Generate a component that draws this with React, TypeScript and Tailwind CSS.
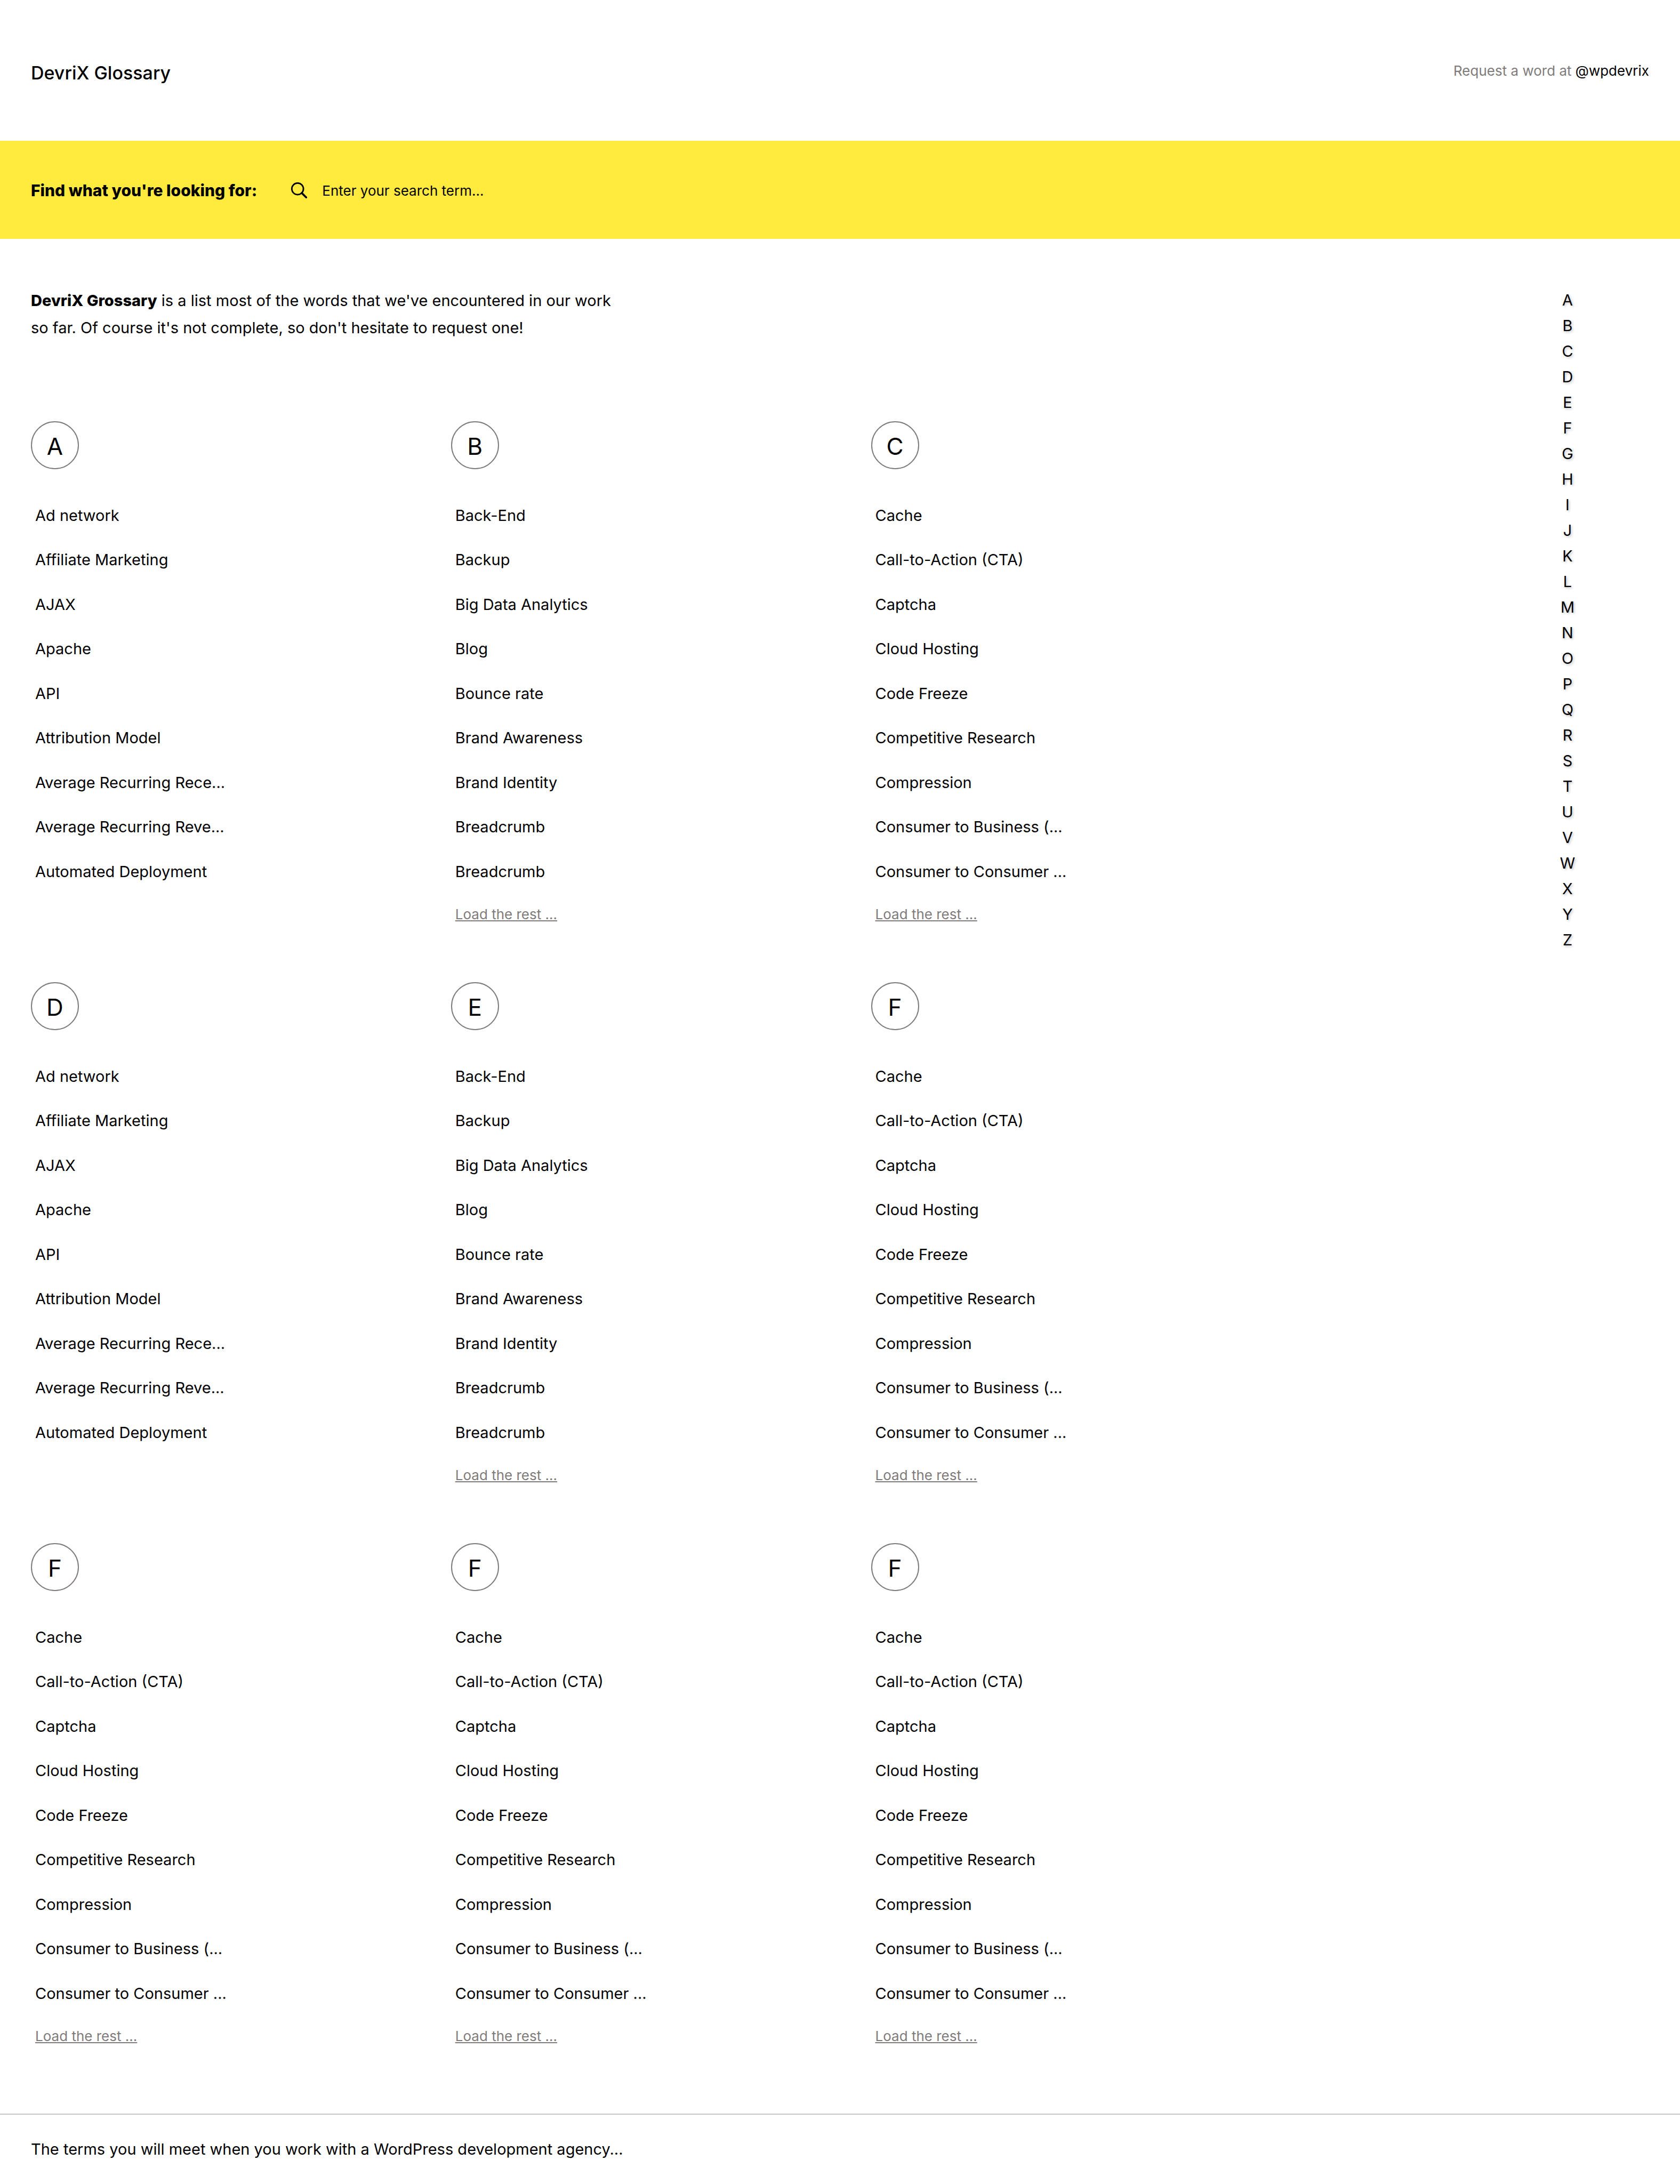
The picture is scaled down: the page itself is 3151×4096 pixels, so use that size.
import { useState } from "react";

const A_TERMS = [
  "Ad network",
  "Affiliate Marketing",
  "AJAX",
  "Apache",
  "API",
  "Attribution Model",
  "Average Recurring Rece...",
  "Average Recurring Reve...",
  "Automated Deployment",
];

const B_TERMS = [
  "Back-End",
  "Backup",
  "Big Data Analytics",
  "Blog",
  "Bounce rate",
  "Brand Awareness",
  "Brand Identity",
  "Breadcrumb",
  "Breadcrumb",
];

const C_TERMS = [
  "Cache",
  "Call-to-Action (CTA)",
  "Captcha",
  "Cloud Hosting",
  "Code Freeze",
  "Competitive Research",
  "Compression",
  "Consumer to Business (...",
  "Consumer to Consumer ...",
];

type Group = { id: string; letter: string; terms: string[]; more: boolean };

const GROUPS: Group[] = [
  { id: "a", letter: "A", terms: A_TERMS, more: false },
  { id: "b", letter: "B", terms: B_TERMS, more: true },
  { id: "c", letter: "C", terms: C_TERMS, more: true },
  { id: "d", letter: "D", terms: A_TERMS, more: false },
  { id: "e", letter: "E", terms: B_TERMS, more: true },
  { id: "f", letter: "F", terms: C_TERMS, more: true },
  { id: "f-2", letter: "F", terms: C_TERMS, more: true },
  { id: "f-3", letter: "F", terms: C_TERMS, more: true },
  { id: "f-4", letter: "F", terms: C_TERMS, more: true },
];

const ALPHABET = "ABCDEFGHIJKLMNOPQRSTUVWXYZ".split("");

function SearchIcon() {
  return (
    <svg viewBox="0 0 32 32" className="size-[30px] shrink-0" fill="none" stroke="currentColor" aria-hidden="true">
      <circle cx="13" cy="13" r="11.6" strokeWidth="3" />
      <path d="M21.2 21.2l9 9" strokeWidth="3.8" strokeLinecap="round" />
    </svg>
  );
}

function TermGroup({ group }: { group: Group }) {
  return (
    <section id={group.id} className="flex flex-col items-start pl-[58px]">
      <h2 className="mb-[23px] flex size-[90px] items-center justify-center rounded-full border-2 border-[#7f7b7b] pt-1 text-[44px] leading-[52px]">
        {group.letter}
      </h2>
      <ul className="flex flex-col pl-2">
        {group.terms.map((term, i) => (
          <li key={i} className="odd:mt-11 even:mt-[43px]">
            <a href={"#" + group.id} className="block leading-10">
              {term}
            </a>
          </li>
        ))}
      </ul>
      {group.more && (
        <button
          type="button"
          className="mt-10 ml-2 text-[26px] leading-10 text-[#7f7b7b] underline decoration-2 underline-offset-2 [text-decoration-skip-ink:none]"
        >
          Load the rest ...
        </button>
      )}
    </section>
  );
}

export default function App() {
  const [query, setQuery] = useState("");
  return (
    <div className="flex min-h-screen flex-col bg-white font-['Inter',sans-serif] text-[29px] text-black">
      <header className="flex items-start justify-between px-[58px] pt-28 pb-[102px]">
        <h1 className="text-[34px] leading-[50px] font-medium">DevriX Glossary</h1>
        <p className="text-[26px] leading-[42px] text-[#7f7b7b]">
          Request a word at{" "}
          <a href="#wpdevrix" className="text-black">
            @wpdevrix
          </a>
        </p>
      </header>

      <form className="flex h-[184px] items-center bg-[#ffea3d] px-[58px] pt-0.5" onSubmit={(e) => e.preventDefault()}>
        <label htmlFor="search" className="mr-16 text-[30px] leading-10 font-extrabold">
          Find what you&#39;re looking for:
        </label>
        <SearchIcon />
        <input
          id="search"
          type="text"
          value={query}
          onChange={(e) => setQuery(e.target.value)}
          placeholder="Enter your search term..."
          className="ml-7 flex-1 bg-transparent pt-0.5 text-[26px] leading-10 outline-none placeholder:text-black"
        />
      </form>

      <div className="flex flex-1 items-start">
        <main className="w-3/4 pt-[90px] pb-[124px]">
          <p className="mb-[150px] pl-[58px] leading-[51px]">
            <strong className="font-extrabold">DevriX Grossary</strong> is a list most of the words that we&#39;ve
            encountered in our work
            <br />
            so far. Of course it&#39;s not complete, so don&#39;t hesitate to request one!
          </p>
          <div className="grid grid-cols-3 gap-y-[107px]">
            {GROUPS.map((g) => (
              <TermGroup key={g.id} group={g} />
            ))}
          </div>
        </main>

        <aside className="flex w-1/4 justify-end pt-[91px]">
          <nav aria-label="Alphabet" className="w-[422px]">
            <ul className="flex flex-col items-center leading-[48px] [text-shadow:2px_2px_4px_rgba(0,0,0,0.25)]">
              {ALPHABET.map((l) => (
                <li key={l}>
                  <a href={"#" + l.toLowerCase()}>{l}</a>
                </li>
              ))}
            </ul>
          </nav>
        </aside>
      </div>

      <footer className="border-t-2 border-[#c8c8c8] px-[58px] py-[45px] leading-10">
        The terms you will meet when you work with a WordPress development agency...
      </footer>
    </div>
  );
}
